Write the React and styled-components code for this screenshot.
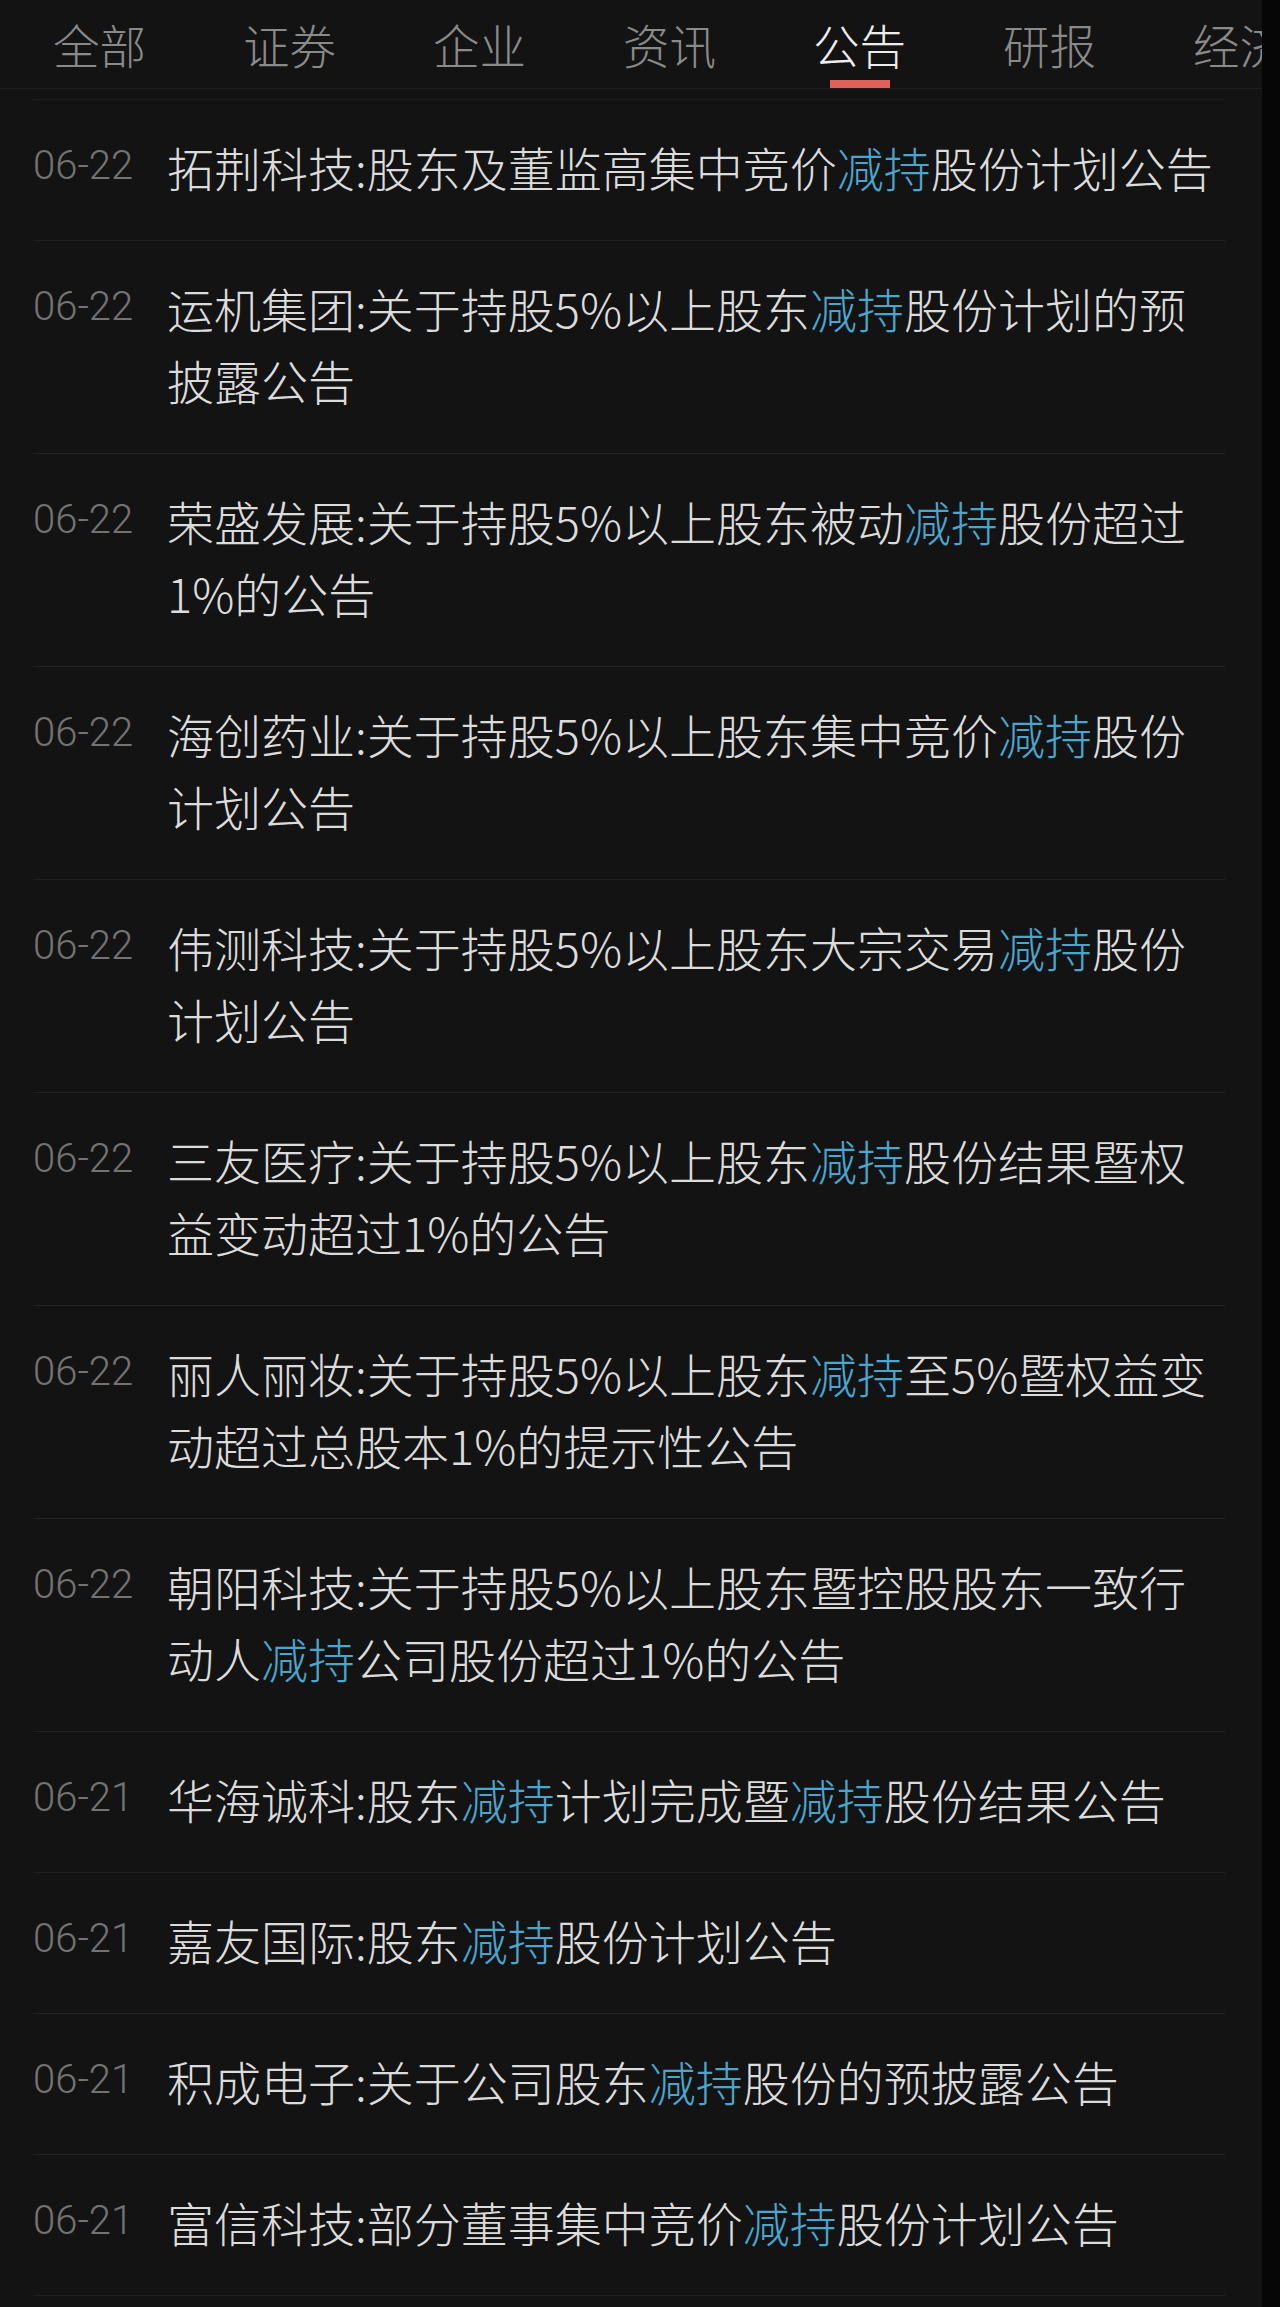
import React from "react";
import styled, { createGlobalStyle } from "styled-components";

const GlobalStyle = createGlobalStyle`
  html, body {
    margin: 0;
    padding: 0;
    background: #131313;
  }
`;

const Page = styled.div`
  display: flex;
  min-height: 100vh;
  background: #131313;
  font-family: "Noto Sans CJK SC", "Noto Sans", sans-serif;
`;

const Main = styled.div`
  flex: 1;
  min-width: 0;
  overflow: hidden;
`;

const ScrollStrip = styled.div`
  width: 18px;
  background: #060606;
`;

const TabBar = styled.div`
  display: flex;
  gap: 97px;
  height: 88px;
  padding-left: 53px;
  border-bottom: 1px solid #1f1f1f;
  white-space: nowrap;
  overflow: hidden;
`;

const Tab = styled.div`
  position: relative;
  flex-shrink: 0;
  font-size: 46.5px;
  font-weight: 300;
  line-height: 88px;
  color: ${(p) => (p.$active ? "#ededed" : "#8a8a8a")};

  &::after {
    content: "";
    display: ${(p) => (p.$active ? "block" : "none")};
    position: absolute;
    left: 50%;
    bottom: 0;
    width: 60px;
    height: 8px;
    margin-left: -30px;
    background: #e0605a;
  }
`;

const List = styled.div`
  margin: 10px 37px 0 33px;
  border-top: 1px solid #1f1f1f;
`;

const Row = styled.div`
  display: flex;
  align-items: flex-start;
  padding: 31px 0 37px;
  border-bottom: 1px solid #222222;
`;

const Date = styled.div`
  flex: 0 0 134px;
  padding-top: 3px;
  font-family: Roboto, "Liberation Sans", sans-serif;
  font-size: 40px;
  font-weight: 300;
  line-height: 64px;
  color: #737373;
`;

const Title = styled.div`
  flex: 1;
  font-size: 47px;
  font-weight: 300;
  line-height: 72px;
  color: #dcdcdc;
`;

const Hl = styled.span`
  color: #4ba6cf;
`;

const tabs = ["全部", "证券", "企业", "资讯", "公告", "研报", "经济"];

const items = [
  ["06-22", "拓荆科技:股东及董监高集中竞价", "减持", "股份计划公告"],
  ["06-22", "运机集团:关于持股5%以上股东", "减持", "股份计划的预披露公告"],
  ["06-22", "荣盛发展:关于持股5%以上股东被动", "减持", "股份超过1%的公告"],
  ["06-22", "海创药业:关于持股5%以上股东集中竞价", "减持", "股份计划公告"],
  ["06-22", "伟测科技:关于持股5%以上股东大宗交易", "减持", "股份计划公告"],
  ["06-22", "三友医疗:关于持股5%以上股东", "减持", "股份结果暨权益变动超过1%的公告"],
  ["06-22", "丽人丽妆:关于持股5%以上股东", "减持", "至5%暨权益变动超过总股本1%的提示性公告"],
  ["06-22", "朝阳科技:关于持股5%以上股东暨控股股东一致行动人", "减持", "公司股份超过1%的公告"],
  ["06-21", "华海诚科:股东", "减持", "计划完成暨", "减持", "股份结果公告"],
  ["06-21", "嘉友国际:股东", "减持", "股份计划公告"],
  ["06-21", "积成电子:关于公司股东", "减持", "股份的预披露公告"],
  ["06-21", "富信科技:部分董事集中竞价", "减持", "股份计划公告"],
];

const App = () => {
  return (
    <>
      <GlobalStyle />
      <Page>
        <Main>
          <TabBar>
            {tabs.map((t) => (
              <Tab key={t} $active={t === "公告"}>
                {t}
              </Tab>
            ))}
          </TabBar>
          <List>
            {items.map(([date, ...parts], i) => (
              <Row key={i}>
                <Date>{date}</Date>
                <Title>
                  {parts.map((p, j) =>
                    j % 2 === 1 ? <Hl key={j}>{p}</Hl> : <span key={j}>{p}</span>
                  )}
                </Title>
              </Row>
            ))}
          </List>
        </Main>
        <ScrollStrip />
      </Page>
    </>
  );
};

export default App;
